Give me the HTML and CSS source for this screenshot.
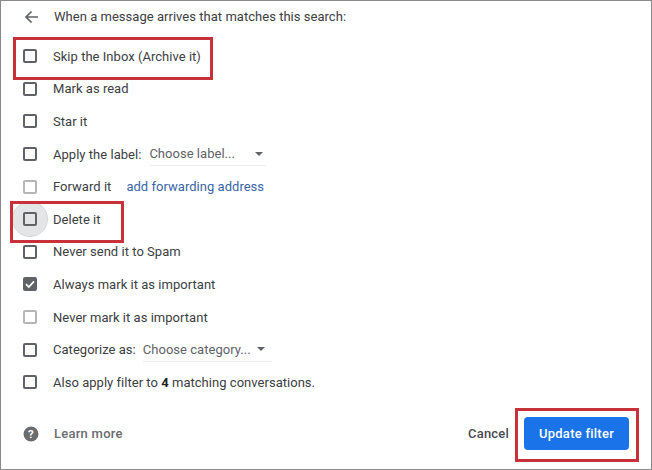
FILE: index.html
```html
<!DOCTYPE html>
<html lang="en">
<head>
    <meta charset="UTF-8">
    <title>Update filter</title>
    <link rel="stylesheet" href="styles.css">
</head>
<body>
    <div class="dialog">
        <div class="header">
            <svg class="back" width="14" height="14" viewBox="0 0 14 14"><path d="M14 7H2M7.5 1.5 2 7l5.5 5.5" fill="none" stroke="#5f6368" stroke-width="1.7"/></svg>
            <span>When a message arrives that matches this search:</span>
        </div>
        <div class="options">
            <div class="row"><span class="box"></span><span>Skip the Inbox (Archive it)</span></div>
            <div class="row"><span class="box"></span><span>Mark as read</span></div>
            <div class="row"><span class="box"></span><span>Star it</span></div>
            <div class="row"><span class="box"></span><span>Apply the label:</span>
                <span class="select label-select">Choose label...<i class="caret"></i></span></div>
            <div class="row"><span class="box light"></span><span>Forward it</span><a class="link">add forwarding address</a></div>
            <div class="row"><span class="box focus"></span><span>Delete it</span></div>
            <div class="row"><span class="box"></span><span>Never send it to Spam</span></div>
            <div class="row"><span class="box checked">
                <svg width="14" height="14" viewBox="0 0 14 14"><path d="M3 7.2 5.8 10 11 4.4" fill="none" stroke="#fff" stroke-width="1.7"/></svg>
            </span><span>Always mark it as important</span></div>
            <div class="row"><span class="box light"></span><span>Never mark it as important</span></div>
            <div class="row"><span class="box"></span><span>Categorize as:</span>
                <span class="select cat-select">Choose category...<i class="caret"></i></span></div>
            <div class="row"><span class="box"></span><span>Also apply filter to <b>4</b> matching conversations.</span></div>
        </div>
        <div class="footer">
            <svg class="help" width="16" height="16" viewBox="0 0 16 16"><circle cx="8" cy="8" r="7.5" fill="#6a6c6f"/><text x="8" y="12" text-anchor="middle" font-family="Roboto, sans-serif" font-size="11.5" font-weight="700" fill="#fff">?</text></svg>
            <a class="learn">Learn more</a>
            <span class="cancel">Cancel</span>
            <button class="update">Update filter</button>
        </div>
        <div class="mark mark-skip"></div>
        <div class="mark mark-delete"></div>
        <div class="mark mark-update"></div>
    </div>
</body>
</html>
```

FILE: styles.css
```css
html, body {
    margin: 0;
    padding: 0;
    background-color: #fff;
}
.dialog {
    position: relative;
    isolation: isolate;
    box-sizing: border-box;
    width: 652px;
    height: 470px;
    border: 1px solid #8a8a8a;
    padding: 0 0 0 22px;
    font-family: Roboto, "Liberation Sans", sans-serif;
    font-size: 13px;
    letter-spacing: 0.03px;
    color: #3c4043;
    overflow: hidden;
}
.header {
    display: flex;
    align-items: center;
    height: 30px;
}
.back {
    margin-left: 1px;
    margin-right: 16px;
    margin-top: 2px;
}
.options {
    margin-top: 9px;
}
.row {
    display: flex;
    align-items: center;
    height: 32.6px;
}
.box {
    box-sizing: border-box;
    flex: none;
    width: 14px;
    height: 14px;
    margin-right: 16px;
    border: 2px solid #5f6368;
    border-radius: 2px;
    position: relative;
}
.box.light {
    border-color: #b4b6b8;
}
.box.checked {
    border: none;
    background-color: #5f6368;
}
.box.checked svg {
    display: block;
}
.box.focus::before {
    content: "";
    position: absolute;
    left: -13px;
    top: -13px;
    width: 36px;
    height: 36px;
    border-radius: 50%;
    background-color: #e4e5e6;
    border: 1px solid #d5d6d8;
    box-sizing: border-box;
    z-index: -1;
}
.select {
    display: flex;
    align-items: center;
    height: 24px;
    border-bottom: 1px solid #eceded;
    color: #5f6368;
    box-sizing: border-box;
}
.label-select {
    width: 117px;
    margin-left: 8px;
}
.cat-select {
    width: 129px;
    margin-left: 7px;
}
.caret {
    margin-left: auto;
    width: 0;
    height: 0;
    border-left: 4px solid transparent;
    border-right: 4px solid transparent;
    border-top: 4px solid #5f6368;
}
.label-select .caret {
    margin-right: 3px;
}
.cat-select .caret {
    margin-right: 7px;
}
.link {
    margin-left: 15px;
    color: #3a65a8;
}
b {
    font-weight: 700;
    color: #202124;
}
.footer {
    display: flex;
    align-items: center;
    margin-top: 18px;
    height: 34px;
}
.help {
    margin-right: 15px;
}
.learn {
    color: #6a6c6f;
    font-weight: 500;
    letter-spacing: 0.25px;
}
.cancel {
    margin-left: auto;
    font-weight: 500;
    letter-spacing: 0.2px;
    color: #4a4c4f;
}
.update {
    box-sizing: border-box;
    width: 105px;
    height: 33px;
    margin: 0 22px 0 15px;
    border: none;
    border-radius: 4px;
    background-color: #1a73e8;
    color: #fff;
    font-family: inherit;
    font-size: 13px;
    font-weight: 500;
    letter-spacing: 0.25px;
}
.mark {
    position: absolute;
    box-sizing: border-box;
    border: 3px solid #c8303a;
}
.mark-skip {
    left: 12px;
    top: 36px;
    width: 200px;
    height: 43px;
}
.mark-delete {
    left: 9px;
    top: 200px;
    width: 114px;
    height: 42px;
}
.mark-update {
    left: 514px;
    top: 407px;
    width: 124px;
    height: 54px;
}
```
